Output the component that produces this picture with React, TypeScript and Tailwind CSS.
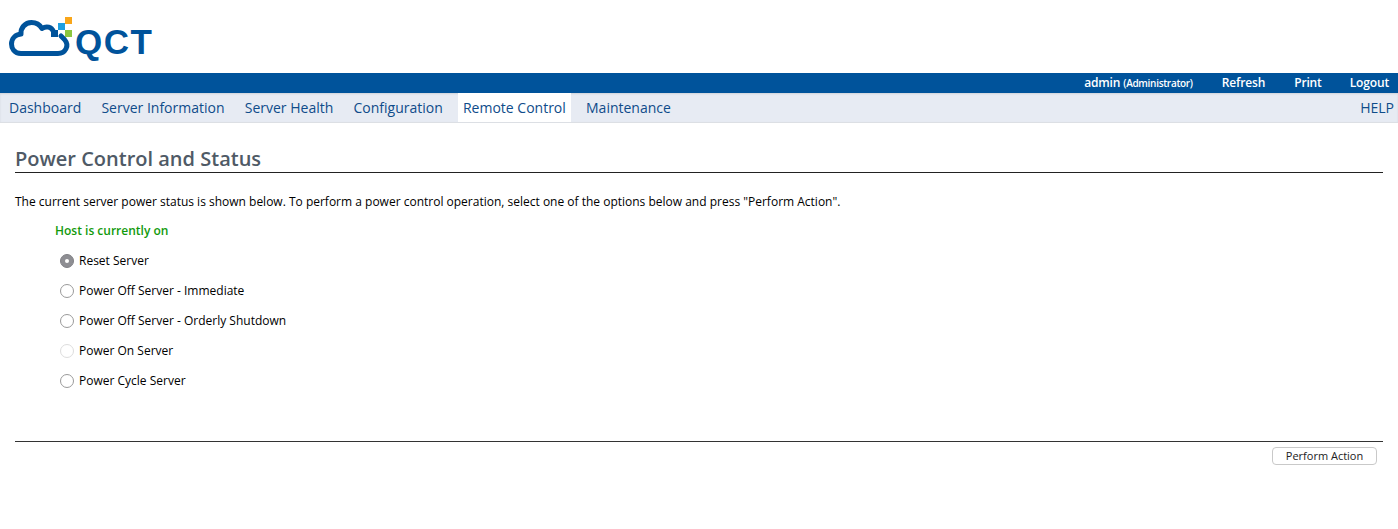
const navItems = ["Dashboard", "Server Information", "Server Health", "Configuration", "Remote Control", "Maintenance"];
const options = [
  { label: "Reset Server", state: "checked" },
  { label: "Power Off Server - Immediate", state: "normal" },
  { label: "Power Off Server - Orderly Shutdown", state: "normal" },
  { label: "Power On Server", state: "disabled" },
  { label: "Power Cycle Server", state: "normal" },
];

function Logo() {
  return (
    <svg width="160" height="62" viewBox="0 0 160 62" className="block">
      <path
        d="M61 34 L64.500 37.500 C70 44 65 51.500 58 51.500 L21 51.500 C14 51.500 11.500 46 11.500 42 C11.500 36.500 15.500 32.500 21 32 C20.500 26 25 20.500 31.500 20.500 C36 20.500 40 23 42 26.500 C46.500 23.500 51.500 25 53.500 29.500"
        fill="none"
        stroke="#00539b"
        strokeWidth="5"
        strokeLinecap="round"
        strokeLinejoin="round"
      />
      <rect x="51" y="28" width="7" height="7" fill="#00539b" />
      <rect x="58" y="21" width="7" height="7" fill="#1e9fe0" />
      <rect x="65" y="15" width="7" height="7" fill="#f9a61a" />
      <rect x="65" y="28" width="7" height="7" fill="#8cc63f" />
      <text x="75" y="51.500" fontFamily="'Liberation Sans', sans-serif" fontWeight="700" fontSize="35" letterSpacing="1.500" fill="#00539b">
        QCT
      </text>
    </svg>
  );
}

function Radio({ state }: { state: string }) {
  if (state === "checked") {
    return (
      <span className="flex h-[14px] w-[14px] items-center justify-center rounded-full bg-[#8e8e93] border border-[#808085]">
        <span className="h-1 w-1 rounded-full bg-white" />
      </span>
    );
  }
  return (
    <span
      className={
        state === "disabled"
          ? "h-[14px] w-[14px] rounded-full border border-[#dddddd] bg-white"
          : "h-[14px] w-[14px] rounded-full border border-[#9a9a9a] bg-white"
      }
    />
  );
}

export default function App() {
  return (
    <div className="min-h-[529px] bg-white font-['Open_Sans',sans-serif] text-[12px] text-black">
      <header className="h-[73px] pl-0 pt-[2px]">
        <Logo />
      </header>
      <div className="flex h-5 items-center justify-end bg-[#00539b] pb-[1px] pr-[9px] text-[12px] font-semibold tracking-[-0.15px] text-white">
        <span className="mr-[29px]">
          admin <span className="text-[10px] tracking-[-0.3px]">(Administrator)</span>
        </span>
        <span className="mr-[29px]">Refresh</span>
        <span className="mr-[28px]">Print</span>
        <span>Logout</span>
      </div>
      <nav className="flex h-[30px] items-stretch justify-between border-b border-[#dcdfe4] bg-[#e7ebf3] text-[14px] text-[#0f4c8a] shadow-[inset_0_1px_2px_rgba(0,0,0,0.1)]">
        <div className="flex items-stretch gap-[10.2px] pl-[4px]">
          {navItems.map((item) => (
            <span
              key={item}
              className={
                item === "Remote Control"
                  ? "flex items-center bg-white px-[5px]"
                  : "flex items-center px-[5px]"
              }
            >
              {item}
            </span>
          ))}
        </div>
        <span className="flex items-center pr-[4px]">HELP</span>
      </nav>
      <main className="px-[15px]">
        <h1 className="mt-[22px] border-b border-[#222222] text-[20px] leading-[27px] font-semibold text-[#4f5a66]">
          Power Control and Status
        </h1>
        <p className="mt-[20px] leading-[17px]">
          The current server power status is shown below. To perform a power control operation, select one of the options below and press "Perform Action".
        </p>
        <div className="mt-[12px] pl-[40px] leading-[17px] font-semibold text-[#129a0c]">Host is currently on</div>
        <div className="mt-[7px] flex flex-col pl-[45px]">
          {options.map((o) => (
            <label key={o.label} className="flex h-[30px] items-center gap-[5px]">
              <Radio state={o.state} />
              <span>{o.label}</span>
            </label>
          ))}
        </div>
        <div className="mt-[45px] flex flex-col border-t border-[#333333]">
          <div className="flex justify-end pr-[6px] pt-[5px]">
            <button className="h-[18px] w-[105px] rounded-[4px] border border-[#c9c9c9] bg-white pb-[2px] text-[11px] leading-none text-[#222222]">
              Perform Action
            </button>
          </div>
        </div>
      </main>
    </div>
  );
}
